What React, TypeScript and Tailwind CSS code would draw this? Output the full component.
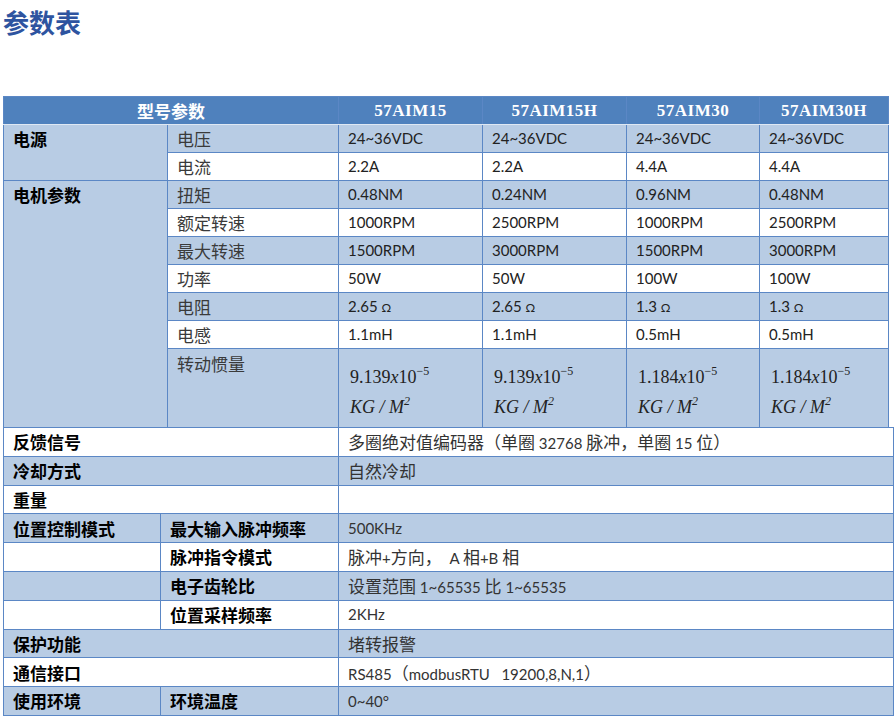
const BLUE = "bg-[#b8cce4]";
const WHITE = "bg-white";

const models = ["57AIM15", "57AIM15H", "57AIM30", "57AIM30H"];

type UpperRow = {
  group?: string;
  span?: number;
  label: string;
  vals?: string[];
  formula?: boolean;
  tall?: boolean;
};

const upperRows: UpperRow[] = [
  { group: "电源", span: 2, label: "电压", vals: ["24~36VDC", "24~36VDC", "24~36VDC", "24~36VDC"] },
  { label: "电流", vals: ["2.2A", "2.2A", "4.4A", "4.4A"] },
  { group: "电机参数", span: 7, label: "扭矩", vals: ["0.48NM", "0.24NM", "0.96NM", "0.48NM"] },
  { label: "额定转速", vals: ["1000RPM", "2500RPM", "1000RPM", "2500RPM"] },
  { label: "最大转速", vals: ["1500RPM", "3000RPM", "1500RPM", "3000RPM"] },
  { label: "功率", vals: ["50W", "50W", "100W", "100W"] },
  { label: "电阻", vals: ["2.65 Ω", "2.65 Ω", "1.3 Ω", "1.3 Ω"] },
  { label: "电感", vals: ["1.1mH", "1.1mH", "0.5mH", "0.5mH"] },
  { label: "转动惯量", formula: true, tall: true },
];

const inertia = ["9.139", "9.139", "1.184", "1.184"];

type LowerRow = {
  group?: string;
  label?: string;
  value: string;
};

const lowerRows: LowerRow[] = [
  { group: "反馈信号", value: "多圈绝对值编码器（单圈 32768 脉冲，单圈 15 位）" },
  { group: "冷却方式", value: "自然冷却" },
  { group: "重量", value: "" },
  { group: "位置控制模式", label: "最大输入脉冲频率", value: "500KHz" },
  { group: "", label: "脉冲指令模式", value: "脉冲+方向，  A 相+B 相" },
  { group: "", label: "电子齿轮比", value: "设置范围 1~65535 比 1~65535" },
  { group: "", label: "位置采样频率", value: "2KHz" },
  { group: "保护功能", value: "堵转报警" },
  { group: "通信接口", value: "RS485（modbusRTU   19200,8,N,1）" },
  { group: "使用环境", label: "环境温度", value: "0~40°" },
];

const cell = "border border-[#5b87c5] px-[9px] align-middle";
const bold = "font-bold text-[17px] text-black font-['Noto_Sans_CJK_SC',sans-serif]";
const plain = "text-[17px] text-[#3a3a3a] font-['Noto_Sans_CJK_SC',sans-serif]";

// CJK runs are set larger than the latin runs, as in the source document
function Mixed({ text }: { text: string }) {
  const parts = text.match(/[\u3000-\u303f\u4e00-\u9fff\uff00-\uffef]+|[^\u3000-\u303f\u4e00-\u9fff\uff00-\uffef]+/g) || [];
  return (
    <>
      {parts.map((p, i) =>
        /[\u3000-\u303f\u4e00-\u9fff\uff00-\uffef]/.test(p) ? (
          <span key={i} className="text-[17px] font-['Noto_Sans_CJK_SC',sans-serif]">
            {p}
          </span>
        ) : p.includes("Ω") ? (
          <span key={i}>
            {p.replace("Ω", "")}
            <span className="text-[12px]">Ω</span>
          </span>
        ) : (
          <span key={i}>{p}</span>
        )
      )}
    </>
  );
}

function Inertia({ base }: { base: string }) {
  return (
    <div className="font-['Liberation_Serif',serif] text-[18px] text-[#222] pl-[2px]">
      <div className="leading-[30px]">
        {base}
        <i>x</i>10<sup className="text-[12px] relative -top-[8px]">−5</sup>
      </div>
      <div className="leading-[30px] italic">
        KG / M<sup className="text-[12px] relative -top-[8px]">2</sup>
      </div>
    </div>
  );
}

export default function App() {
  return (
    <div className="w-[896px] h-[719px] bg-white overflow-hidden font-['Lato','Noto_Sans_CJK_SC',sans-serif]">
      <h1 className="pl-[3px] pt-[7px] h-[96px] text-[26px] leading-[30px] font-bold text-[#2e54a0] font-['Noto_Sans_CJK_SC',sans-serif]">
        参数表
      </h1>

      {/* model columns */}
      <table className="ml-[3px] w-[885px] table-fixed border-collapse">
        <colgroup>
          <col className="w-[164px]" />
          <col className="w-[171px]" />
          <col className="w-[144px]" />
          <col className="w-[144px]" />
          <col className="w-[133px]" />
          <col className="w-[129px]" />
        </colgroup>
        <thead>
          <tr className="h-[28px] bg-[#4f81bd]">
            <th
              colSpan={2}
              className="border border-[#5b87c5] border-b-[#dfe8f3] text-center text-white text-[17px] font-bold font-['Noto_Sans_CJK_SC',sans-serif]"
            >
              型号参数
            </th>
            {models.map((m) => (
              <th
                key={m}
                className="border border-[#5b87c5] border-b-[#dfe8f3] text-center text-white text-[17px] font-bold font-['Liberation_Serif',serif] tracking-[0.5px]"
              >
                {m}
              </th>
            ))}
          </tr>
        </thead>
        <tbody>
          {upperRows.map((r, i) => {
            const bg = i % 2 === 0 ? BLUE : WHITE;
            return (
              <tr key={r.label} className={r.tall ? "h-[79px]" : "h-[28px]"}>
                {r.group && (
                  <td rowSpan={r.span} className={`${cell} ${BLUE} ${bold} align-top pt-[1px] leading-[26px]`}>
                    {r.group}
                  </td>
                )}
                <td className={`${cell} ${bg} ${plain} ${r.tall ? "align-top pt-[2px]" : ""}`}>
                  {r.label}
                </td>
                {r.formula
                  ? inertia.map((b, j) => (
                      <td key={j} className={`${cell} ${bg} pt-[8px]`}>
                        <Inertia base={b} />
                      </td>
                    ))
                  : r.vals!.map((v, j) => (
                      <td key={j} className={`${cell} ${bg} text-[15px] text-[#222]`}>
                        <Mixed text={v} />
                      </td>
                    ))}
              </tr>
            );
          })}
        </tbody>
      </table>

      {/* shared rows */}
      <table className="ml-[3px] w-[890px] table-fixed border-collapse -mt-px">
        <colgroup>
          <col className="w-[157px]" />
          <col className="w-[178px]" />
          <col className="w-[555px]" />
        </colgroup>
        <tbody>
          {lowerRows.map((r, i) => {
            const bg = i % 2 === 0 ? WHITE : BLUE;
            return (
              <tr key={i} className="h-[28.8px]">
                {r.label === undefined ? (
                  <td colSpan={2} className={`${cell} ${bg} ${bold}`}>
                    {r.group}
                  </td>
                ) : (
                  <>
                    <td className={`${cell} ${bg} ${bold}`}>{r.group}</td>
                    <td className={`${cell} ${bg} ${bold}`}>{r.label}</td>
                  </>
                )}
                <td className={`${cell} ${bg} text-[15px] text-[#333] whitespace-pre`}>
                  <Mixed text={r.value} />
                </td>
              </tr>
            );
          })}
        </tbody>
      </table>
    </div>
  );
}
